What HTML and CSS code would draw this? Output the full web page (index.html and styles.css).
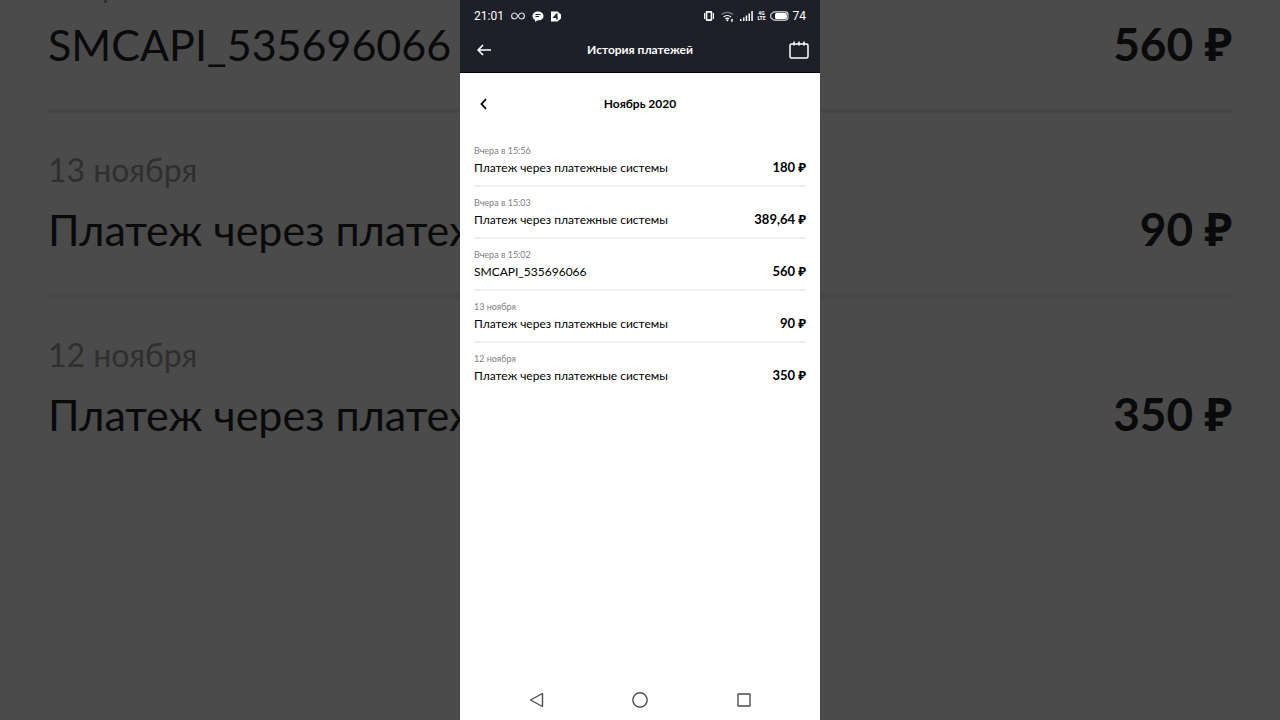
FILE: index.html
```html
<!DOCTYPE html>
<html lang="ru">
<head>
    <meta charset="UTF-8">
    <meta name="viewport" content="width=device-width, initial-scale=1.0">
    <title>История платежей</title>
    <link rel="stylesheet" href="styles.css">
</head>
<body>
    <!-- Enlarged dimmed copy of the list behind the phone -->
    <div class="backdrop" aria-hidden="true">
        <ul class="payments payments-large">
            <li class="payment">
                <span class="payment-date">Вчера в 15:02</span>
                <div class="payment-row">
                    <span class="payment-name">SMCAPI_535696066</span>
                    <span class="payment-amount">560 ₽</span>
                </div>
            </li>
            <li class="payment">
                <span class="payment-date">13 ноября</span>
                <div class="payment-row">
                    <span class="payment-name">Платеж через платежные системы</span>
                    <span class="payment-amount">90 ₽</span>
                </div>
            </li>
            <li class="payment">
                <span class="payment-date">12 ноября</span>
                <div class="payment-row">
                    <span class="payment-name">Платеж через платежные системы</span>
                    <span class="payment-amount">350 ₽</span>
                </div>
            </li>
        </ul>
    </div>

    <div class="phone">
        <header class="top">
            <div class="status-bar">
                <div class="status-left">
                    <span>21:01</span>
                    <svg width="14" height="10" viewBox="0 0 14 10" fill="none" stroke="#dcdde0" stroke-width="1.2">
                        <path d="M7 5C5.8 3 5 2 3.6 2a3 3 0 0 0 0 6C5 8 5.800 7 7 5s2-3 3.400-3a3 3 0 0 1 0 6C9 8 8.200 7 7 5z"/>
                    </svg>
                    <svg width="12" height="11" viewBox="0 0 12 11">
                        <path d="M6 .5c3.200 0 5.500 1.900 5.500 4.400S9.200 9.300 6 9.300L3 10.800V8.800C1.400 8 .5 6.600.5 4.900.5 2.400 2.800.5 6 .5z" fill="#fff"/>
                        <path d="M3.500 3.500h5M3.500 5.500h3.500" stroke="#1e2029"/>
                    </svg>
                    <svg width="10" height="11" viewBox="0 0 10 11">
                        <path d="M0 .5h6.500L10 3.500v4L6.500 10.500H0z" fill="#fff"/>
                        <path d="M6 2.500v6L6 6.500H2.200L6 2.500z" fill="#1e2029" stroke="#1e2029"/>
                    </svg>
                </div>
                <div class="status-right">
                    <svg width="10" height="10" viewBox="0 0 10 10" fill="none" stroke="#fff">
                        <rect x="2.500" y=".9" width="5" height="8.200" rx=".5" stroke-width="1.700"/>
                        <path d="M.5 2v6M9.500 2v6"/>
                    </svg>
                    <svg class="wifi" width="13" height="11" viewBox="0 0 13 11" fill="none" stroke-width="1.300">
                        <path d="M.6 3.500a8.500 8.500 0 0 1 11.400 0" stroke="#777a82"/>
                        <path d="M2.600 6a5.500 5.500 0 0 1 7.400 0M4.500 8a2.700 2.700 0 0 1 3.600 0" stroke="#fff"/>
                        <path d="M6.300 8L7.500 9.400 6.300 10.600 5.100 9.400z" fill="#fff"/>
                        <path d="M11 8v2.800" stroke="#c8c9cc" stroke-width="2"/>
                    </svg>
                    <svg width="13" height="10" viewBox="0 0 13 10" fill="#fff">
                        <path d="M0 8h1.500v2H0zM3 6.500h1.500V10H3zM5.700 4.500h1.500V10H5.700zM8.500 2.500H10V10H8.500zM11.300 0h1.500v10h-1.500z"/>
                    </svg>
                    <span class="network"><span>4G</span><span>LTE</span></span>
                    <svg width="19" height="10" viewBox="0 0 19 10">
                        <path d="M4.500 .9h11a2.500 2.500 0 0 1 2.500 2.500v3.200a2.500 2.500 0 0 1-2.500 2.500h-11C2.500 9.100 2.200 7.500.7 6.500v-3C2.200 2.500 2.500.9 4.500.9z" fill="none" stroke="#d6d7da" stroke-width="1.100"/>
                        <rect x="5" y="2.100" width="11.900" height="5.800" rx="1.500" fill="#fff"/>
                    </svg>
                    <span>74</span>
                </div>
            </div>
            <div class="title-bar">
                <button class="icon-btn" aria-label="Назад">
                    <svg width="14" height="12" viewBox="0 0 14 12" fill="none" stroke="#fff" stroke-width="1.700">
                        <path d="M6 1L1.200 6 6 11M1.200 6H14"/>
                    </svg>
                </button>
                <h1>История платежей</h1>
                <button class="icon-btn icon-end" aria-label="Календарь">
                    <svg width="20" height="18" viewBox="0 0 20 18" fill="none" stroke="#fff" stroke-width="1.500">
                        <rect x="1" y="3" width="18" height="14" rx="1.500"/>
                        <path d="M5 .5v4M10 .5v4M15 .5v4"/>
                    </svg>
                </button>
            </div>
        </header>

        <main class="content">
            <div class="month-bar">
                <button class="icon-btn" aria-label="Предыдущий месяц">
                    <svg width="14" height="12" viewBox="0 0 14 12" fill="none" stroke="#000" stroke-width="1.800">
                        <path d="M9 1.200L4.500 6 9 10.800"/>
                    </svg>
                </button>
                <h2>Ноябрь 2020</h2>
            </div>
            <ul class="payments">
                <li class="payment">
                    <span class="payment-date">Вчера в 15:56</span>
                    <div class="payment-row">
                        <span class="payment-name">Платеж через платежные системы</span>
                        <span class="payment-amount">180 ₽</span>
                    </div>
                </li>
                <li class="payment">
                    <span class="payment-date">Вчера в 15:03</span>
                    <div class="payment-row">
                        <span class="payment-name">Платеж через платежные системы</span>
                        <span class="payment-amount">389,64 ₽</span>
                    </div>
                </li>
                <li class="payment">
                    <span class="payment-date">Вчера в 15:02</span>
                    <div class="payment-row">
                        <span class="payment-name">SMCAPI_535696066</span>
                        <span class="payment-amount">560 ₽</span>
                    </div>
                </li>
                <li class="payment">
                    <span class="payment-date">13 ноября</span>
                    <div class="payment-row">
                        <span class="payment-name">Платеж через платежные системы</span>
                        <span class="payment-amount">90 ₽</span>
                    </div>
                </li>
                <li class="payment">
                    <span class="payment-date">12 ноября</span>
                    <div class="payment-row">
                        <span class="payment-name">Платеж через платежные системы</span>
                        <span class="payment-amount">350 ₽</span>
                    </div>
                </li>
            </ul>
        </main>

        <nav class="nav-bar">
            <button class="icon-btn" aria-label="Назад">
                <svg width="16" height="16" viewBox="0 0 16 16" fill="none" stroke="#4d4d4d" stroke-width="1.400" stroke-linejoin="round">
                    <path d="M14.500 1.500v13L2.500 8z"/>
                </svg>
            </button>
            <button class="icon-btn" aria-label="Домой">
                <svg width="16" height="16" viewBox="0 0 16 16" fill="none" stroke="#4d4d4d" stroke-width="1.400">
                    <circle cx="8" cy="8" r="7.200"/>
                </svg>
            </button>
            <button class="icon-btn" aria-label="Недавние">
                <svg width="16" height="16" viewBox="0 0 16 16" fill="none" stroke="#4d4d4d" stroke-width="1.400">
                    <rect x="2" y="2" width="12" height="12" rx=".5"/>
                </svg>
            </button>
        </nav>
    </div>
</body>
</html>
```
FILE: styles.css
```css
* {
    box-sizing: border-box;
}

body {
    margin: 0;
    height: 100vh;
    display: grid;
    grid-template: minmax(0, 1fr) / minmax(0, 1fr);
    overflow: hidden;
    background-color: #4b4b4b;
    font-family: Lato, "Noto Sans", sans-serif;
    color: #000;
}

.backdrop,
.phone {
    grid-area: 1 / 1;
}

.backdrop {
    overflow: hidden;
    padding: 0 48px;
}

.phone {
    width: 100%;
    max-width: 360px;
    justify-self: center;
    display: flex;
    flex-direction: column;
    background-color: #fff;
    z-index: 1;
}

.icon-btn {
    display: flex;
    justify-content: center;
    padding: 0;
    border: none;
    background: none;
    cursor: pointer;
}

h1,
h2 {
    margin: 0;
    font-size: 12px;
    line-height: 18px;
    font-weight: 700;
    text-align: center;
}

/* Header */
.top {
    background-color: #1e2029;
    color: #fff;
    border-bottom: 1px solid #000;
}

.status-bar {
    display: flex;
    justify-content: space-between;
    align-items: center;
    height: 32px;
    padding: 0 14px;
    font-family: Roboto, sans-serif;
    font-size: 12px;
}

.status-left,
.status-right {
    display: flex;
    align-items: center;
}

.status-left {
    gap: 7px;
}

.status-right {
    gap: 4px;
}

.wifi {
    margin: 0 2px 0 3px;
}

.network {
    display: flex;
    flex-direction: column;
    align-items: center;
    font-size: 5px;
    line-height: 5px;
    font-weight: 700;
}

.title-bar,
.month-bar {
    display: grid;
    align-items: center;
}

.title-bar {
    grid-template-columns: 26px 1fr 26px;
    height: 40px;
    padding: 0 11px 4px;
}

.icon-end {
    justify-self: end;
}

/* Payments */
.content {
    flex: 1;
    padding: 0 14px;
}

.month-bar {
    grid-template-columns: 20px 1fr 20px;
    height: 62px;
}

.payments {
    list-style: none;
    margin: 0;
    padding: 0;
}

.payment {
    padding: 9px 0 7px;
    border-bottom: 2px solid #f0f0f0;
}

.payment:last-child {
    border-bottom: none;
}

.payment-date {
    display: block;
    font-size: 9px;
    line-height: 14px;
    color: #808080;
}

.payment-row {
    display: flex;
    justify-content: space-between;
    align-items: baseline;
    font-size: 12px;
    line-height: 20px;
    white-space: nowrap;
}

.payment-amount {
    font-size: 13px;
    line-height: 16px;
    font-weight: 700;
}

.payments-large {
    margin-top: -72px;
    color: #0a0a0a;
}

.payments-large .payment {
    padding: 32px 0 29px;
    border-bottom-width: 4px;
    border-color: #464646;
}

.payments-large .payment-date {
    font-size: 32px;
    line-height: 50px;
    color: #2f2f30;
}

.payments-large .payment-row {
    font-size: 43px;
    line-height: 70px;
}

.payments-large .payment-amount {
    font-size: 46px;
    line-height: 60px;
}

/* Navigation */
.nav-bar {
    display: flex;
    justify-content: space-between;
    align-items: center;
    height: 40px;
    padding: 0 68px;
}
```
